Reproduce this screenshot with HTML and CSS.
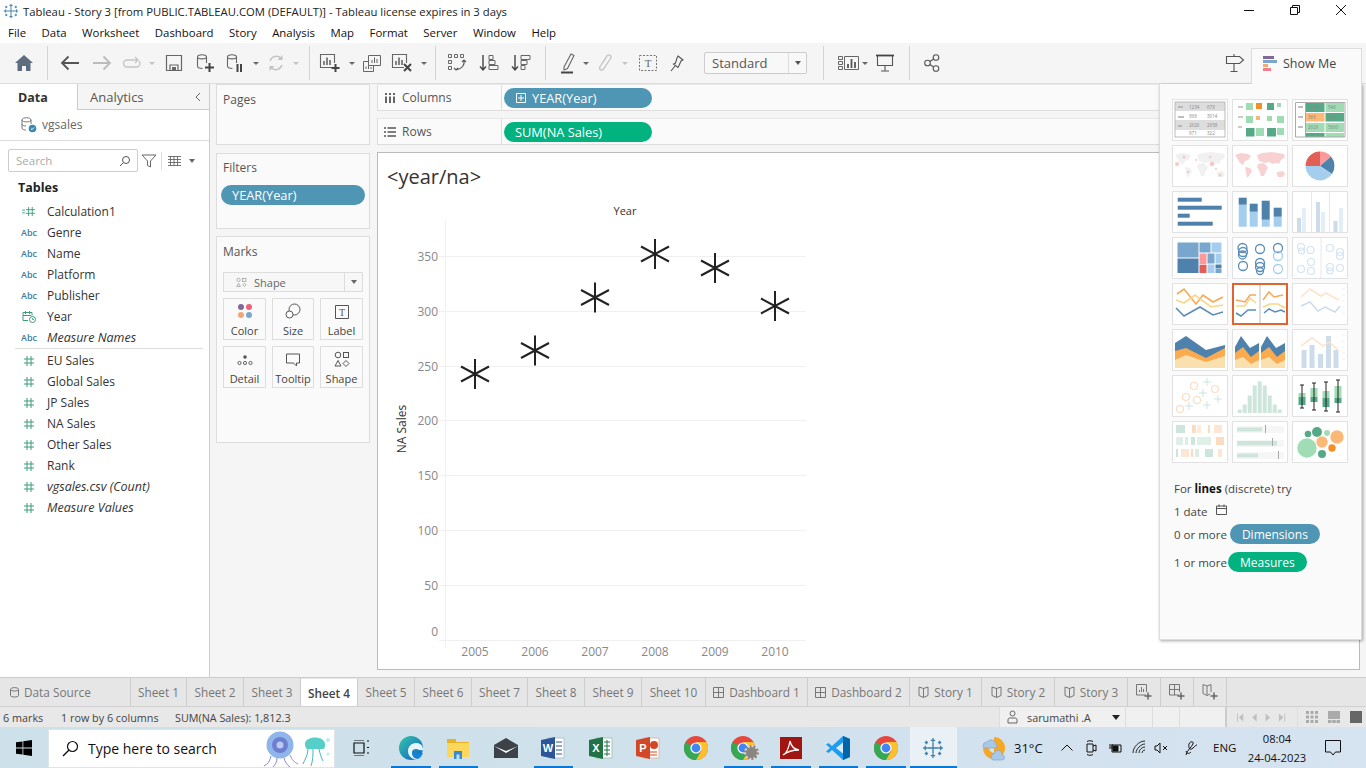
FILE: index.html
```html
<!DOCTYPE html>
<html lang="en">
<head>
<meta charset="utf-8">
<title>Tableau - Story 3</title>
<link rel="stylesheet" href="styles.css">
</head>
<body>
<svg class="defs" width="0" height="0" aria-hidden="true">
  <defs>
    <symbol id="hash" viewBox="0 0 12 12"><path d="M4 1v10M8 1v10M1 4h10M1 8h10" fill="none" stroke="#3f9a7c" stroke-width="1"/></symbol>
    <symbol id="tlogo" viewBox="0 0 20 20"><g fill="none" stroke="#3f7fa8" stroke-width="1.2"><path d="M10 5v10M5 10h10"/><path d="M10 1v4M8 3h4M10 15v4M8 17h4M1 10h4M3 8v4M15 10h4M17 8v4"/><path d="M4 3.500v3M2.500 5h3M16 3.500v3M14.500 5h3M4 13.500v3M2.500 15h3M16 13.500v3M14.500 15h3"/></g></symbol>
    <symbol id="chrome" viewBox="0 0 24 24"><circle cx="12" cy="12" r="12" fill="#e8473b"/><path d="M12 12 1.600 6A12 12 0 0 0 12 24l5-6z" fill="#34a853"/><path d="M12 6h10.400A12 12 0 0 1 12 24l5.200-9z" fill="#fbc02d"/><circle cx="12" cy="12" r="5.600" fill="#fff"/><circle cx="12" cy="12" r="4.400" fill="#4285f4"/></symbol>
    <symbol id="world" viewBox="0 0 54 40"><path d="M2 9l6-2 7 1 3 2-3 4-3 1-2 4-3-2-3-5zM12 21l5 1 2 3-3 5-2 2-1-6zM24 9l5-2 10-1 12 2 1 3-4 3-2 4-3-1-3 1-4-2-4 1-3-1-3-1-1-3zM25 18l5-1 3 2 2 3-2 3-2 5-3 0-2-6-2-3zM44 26l6-1 2 3-2 3-5 0-1-3z"/></symbol>
  </defs>
</svg>
<div class="app">
  <header class="titlebar">
    <svg class="tb-logo"><use href="#tlogo"/></svg>
    <span class="title-text">Tableau - Story 3 [from PUBLIC.TABLEAU.COM (DEFAULT)] - Tableau license expires in 3 days</span>
    <div class="winctl">
      <svg width="12" height="12" viewBox="0 0 12 12"><path d="M1 6.500h10" stroke="#111" fill="none"/></svg>
      <svg width="12" height="12" viewBox="0 0 12 12"><path d="M1.500 3.500h7v7h-7zM3.500 3.500v-2h7v7h-2" stroke="#111" fill="none"/></svg>
      <svg width="12" height="12" viewBox="0 0 12 12"><path d="M1 1l10 10M11 1L1 11" stroke="#111" fill="none"/></svg>
    </div>
  </header>
  <nav class="menubar">
    <span class="m">File</span><span class="m">Data</span><span class="m">Worksheet</span><span class="m">Dashboard</span><span class="m">Story</span><span class="m">Analysis</span><span class="m">Map</span><span class="m">Format</span><span class="m">Server</span><span class="m">Window</span><span class="m">Help</span>
  </nav>
  <div class="toolbar">
    <span class="ti w24"><svg width="20" height="18" viewBox="0 0 20 18"><path d="M10 1 1 9h2.500v8h4.500v-5h4v5h4.500V9H19z" fill="#5d6d7e"/></svg></span>
    <i class="w11"></i><i class="sep"></i><i class="w6"></i>
    <span class="ti w32"><svg width="20" height="16" viewBox="0 0 20 16"><path d="M19 8H2M8.500 1.500 2 8l6.500 6.500" fill="none" stroke="#555" stroke-width="1.800"/></svg></span>
    <span class="ti w32"><svg width="20" height="16" viewBox="0 0 20 16"><path d="M1 8h17M11.500 1.500 18 8l-6.500 6.500" fill="none" stroke="#bbb" stroke-width="1.800"/></svg></span>
    <span class="ti w28"><svg width="20" height="14" viewBox="0 0 20 14"><path d="M15 4H5a3.500 3.500 0 0 0 0 7h10a3.500 3.500 0 0 0 2-6M13 1l3 3-3 3" fill="none" stroke="#c4c4c4" stroke-width="1.300"/></svg></span>
    <i class="w12 caret off"></i>
    <span class="ti w32"><svg width="18" height="18" viewBox="0 0 18 18"><path d="M1.500 1.500h15v15h-15zM5 16.500V11h8v5.500" fill="none" stroke="#666" stroke-width="1.200"/><path d="M7 13h4v3H7z" fill="#666"/></svg></span>
    <span class="ti w30"><svg width="20" height="20" viewBox="0 0 20 20"><path d="M2.500 4c0-3 9-3 9 0v6M2.500 4v9c0 2 2 2.500 5 2.500M2.500 4c0 2.500 9 2.500 9 0" fill="none" stroke="#666" stroke-width="1.100"/><path d="M14.500 10v9M10 14.500h9" stroke="#444" stroke-width="2"/></svg></span>
    <span class="ti w30"><svg width="20" height="20" viewBox="0 0 20 20"><path d="M2.500 4c0-3 9-3 9 0v6M2.500 4v9c0 2 2 2.500 5 2.500M2.500 4c0 2.500 9 2.500 9 0" fill="none" stroke="#666" stroke-width="1.100"/><path d="M12.500 11v8M16 11v8" stroke="#444" stroke-width="2"/></svg></span>
    <i class="w12 caret"></i>
    <span class="ti w28"><svg width="18" height="18" viewBox="0 0 18 18"><path d="M3 7a6.500 6.500 0 0 1 11-2.500M15 11a6.500 6.500 0 0 1-11 2.500" fill="none" stroke="#c4c4c4" stroke-width="1.500"/><path d="M15.500 1v5h-5zM2.500 17v-5h5z" fill="#c4c4c4"/></svg></span>
    <i class="w12 caret off"></i>
    <i class="w7"></i><i class="sep"></i><i class="w4"></i>
    <span class="ti w32"><svg width="22" height="20" viewBox="0 0 22 20"><path d="M14 14.500H1.500v-13h14V10" fill="none" stroke="#666" stroke-width="1.100"/><path d="M5 12V8M8 12V4.500M11 12V7" stroke="#666" stroke-width="1.600"/><path d="M16.500 11v8M12.500 15h8" stroke="#444" stroke-width="2"/></svg></span>
    <i class="w12 caret"></i>
    <span class="ti w28"><svg width="20" height="19" viewBox="0 0 20 19"><path d="M6.500 1.500h12v10h-12zM1.500 7.500h5M1.500 7.500v10h10v-6" fill="none" stroke="#666"/><path d="M10 9V6M12.500 9V3.500M15 9V5M4 15v-2.500M6.500 15v-3.500M9 15v-2" stroke="#666"/></svg></span>
    <span class="ti w32"><svg width="22" height="20" viewBox="0 0 22 20"><path d="M13 14.500H1.500v-13h14V10" fill="none" stroke="#666" stroke-width="1.100"/><path d="M5 12V8M8 12V4.500M11 12V7" stroke="#666" stroke-width="1.600"/><path d="M13 11l7 7M20 11l-7 7" stroke="#444" stroke-width="2"/></svg></span>
    <i class="w12 caret"></i>
    <i class="w5"></i><i class="sep"></i><i class="w5"></i>
    <span class="ti w32"><svg width="20" height="20" viewBox="0 0 20 20"><path d="M1.500 1.500h3v3h-3zM7.500 1.500h3v3h-3zM13.500 1.500h3v3h-3zM1.500 7.500h3v3h-3zM1.500 13.500h3v3h-3z" fill="none" stroke="#666"/><path d="M17 7c1 5-2 9-8 10M7 15l2 2 2-2M15 9l2-2 2 2" fill="none" stroke="#555" stroke-width="1.100"/></svg></span>
    <span class="ti w32"><svg width="20" height="18" viewBox="0 0 20 18"><path d="M4 1v15M1 12.500 4 16l3-3.500" fill="none" stroke="#444" stroke-width="1.400"/><path d="M10 1.500h4v4h-4zM10 6.500h6v4h-6zM10 11.500h9v4h-9z" fill="none" stroke="#666"/></svg></span>
    <span class="ti w32"><svg width="20" height="18" viewBox="0 0 20 18"><path d="M4 1v15M1 12.500 4 16l3-3.500" fill="none" stroke="#444" stroke-width="1.400"/><path d="M10 1.500h9v4h-9zM10 6.500h6v4h-6zM10 11.500h4v4h-4z" fill="none" stroke="#666"/></svg></span>
    <i class="w8"></i><i class="sep"></i><i class="w8"></i>
    <span class="ti w28"><svg width="16" height="22" viewBox="0 0 16 22"><path d="M4 15 11 2l3 1.600-6.500 12.900L4 18z" fill="none" stroke="#666" stroke-width="1.100"/><path d="M1 20.500h12" stroke="#444" stroke-width="2"/></svg></span>
    <i class="w8 caret"></i>
    <span class="ti w30"><svg width="16" height="20" viewBox="0 0 16 20"><path d="M4 12l6-9c2-2.500 5 0 3.500 2.500L6.500 16C5 18 1.500 17 3 13.500L9 5" fill="none" stroke="#c4c4c4" stroke-width="1.300"/></svg></span>
    <i class="w10 caret off"></i>
    <span class="ti w36"><svg width="18" height="16" viewBox="0 0 18 16"><path d="M.5.500h17v15H.500z" fill="none" stroke="#777" stroke-dasharray="2 1.500"/><text x="9" y="12" class="svgt t-t">T</text></svg></span>
    <span class="ti w22"><svg width="14" height="17" viewBox="0 0 14 17"><path d="M8 1l5 4-2 1-2 4.500-1 2L3.500 9 5.500 8 7 3zM5 11l-4 5" fill="none" stroke="#555" stroke-width="1.100"/></svg></span>
    <i class="w16"></i>
    <div class="fit"><span class="fit-l">Standard</span><span class="fit-c"></span></div>
    <i class="w16"></i><i class="sep"></i><i class="w10"></i>
    <span class="ti w28"><svg width="21" height="16" viewBox="0 0 21 16"><path d="M.5 1.500h4v3h-4zM.5 6.500h4v3h-4zM.5 11.500h4v3h-4zM6.500 1.500h14v13h-14z" fill="none" stroke="#666"/><path d="M10 13V9M13.500 13V4M17 13V7" stroke="#555" stroke-width="1.800"/></svg></span>
    <i class="w6 caret"></i>
    <span class="ti w34"><svg width="20" height="18" viewBox="0 0 20 18"><path d="M1 1.500h18" stroke="#444" stroke-width="1.800"/><path d="M2.500 2v9.500h15V2M10 11.500V17M6 17h8" fill="none" stroke="#555" stroke-width="1.100"/></svg></span>
    <i class="w7"></i><i class="sep"></i><i class="w6"></i>
    <span class="ti w32"><svg width="16" height="18" viewBox="0 0 16 18"><circle cx="3.500" cy="9" r="2.800" fill="none" stroke="#555" stroke-width="1.100"/><circle cx="12" cy="3.500" r="2.800" fill="none" stroke="#555" stroke-width="1.100"/><circle cx="12" cy="14.500" r="2.800" fill="none" stroke="#555" stroke-width="1.100"/><path d="M6 7.500l3.500-2.500M6 10.500l3.500 2.500" stroke="#555" fill="none" stroke-width="1.100"/></svg></span>
    <span class="ti sign"><svg width="20" height="20" viewBox="0 0 20 20"><path d="M1.500 3.500h13l4 3.500-4 3.500h-13zM9 1v2.500M9 10.500V18.500M5.500 18.500h7" fill="none" stroke="#555" stroke-width="1.100"/></svg></span>
    <div class="showme-tab">
      <svg width="16" height="15" viewBox="0 0 16 15"><path d="M0 0h11v3H0z" fill="#7f6a9a"/><path d="M0 4h14v3H0z" fill="#7aa7cc"/><path d="M0 8h5v3H0z" fill="#f8a868"/><path d="M0 12h8v3H0z" fill="#f47f8a"/></svg>
      <span>Show Me</span>
    </div>
  </div>

  <main class="main">
    <aside class="datapane">
      <div class="dp-tabs">
        <span class="dp-tab active">Data</span>
        <span class="dp-tab other">Analytics<svg class="collapse" width="8" height="10" viewBox="0 0 8 10"><path d="M6 1 2 5l4 4" fill="none" stroke="#666"/></svg></span>
      </div>
      <div class="ds-row">
        <svg width="17" height="17" viewBox="0 0 17 17"><path d="M2 4c0-3 9-3 9 0M2 4c0 2.500 9 2.500 9 0v4M2 4v8c0 1.500 2 2 4 2M2 8c0 1.500 2 2 4 2" fill="none" stroke="#777"/><circle cx="12.500" cy="12.500" r="3.800" fill="#3a87ad"/><path d="M10.800 12.500l1.200 1.200 2-2.200" fill="none" stroke="#fff"/></svg>
        <span>vgsales</span>
      </div>
      <div class="search-row">
        <div class="searchbox"><span>Search</span><svg width="12" height="12" viewBox="0 0 12 12"><circle cx="7" cy="5" r="3.500" fill="none" stroke="#555"/><path d="M4.500 7.500 1 11" stroke="#555"/></svg></div>
        <svg class="f-ic" width="16" height="14" viewBox="0 0 16 14"><path d="M1 1h14L9.500 7v6l-3-1.500V7z" fill="none" stroke="#666"/></svg>
        <i class="vr"></i>
        <svg class="f-ic2" width="13" height="10" viewBox="0 0 13 10"><path d="M0 .5h13M0 3.500h13M0 6.500h13M0 9.500h13M2.500 0v10M6 0v10M9.500 0v10" stroke="#666" fill="none" stroke-width=".9"/></svg>
        <i class="caret-s"></i>
      </div>
      <div class="tables-h">Tables</div>
      <ul class="fields">
        <li><span class="fi"><svg class="calc" viewBox="0 0 16 12"><path d="M0 4.500h3M0 7.500h3M7 1v10M11 1v10M4 4h10M4 8h10" stroke="#3f9a7c" fill="none"/></svg></span>Calculation1</li>
        <li><span class="fi abc">Abc</span>Genre</li>
        <li><span class="fi abc">Abc</span>Name</li>
        <li><span class="fi abc">Abc</span>Platform</li>
        <li><span class="fi abc">Abc</span>Publisher</li>
        <li><span class="fi"><svg class="yr" viewBox="0 0 14 13"><path d="M1 2.500h9v3M1 2.500v8h5M1 5.500h8M3.500 1v3M7.500 1v3" fill="none" stroke="#3f9a7c"/><circle cx="10.500" cy="9.500" r="3" fill="none" stroke="#3f9a7c"/><path d="M10.500 8v1.500H12" fill="none" stroke="#3f9a7c" stroke-width=".8"/></svg></span>Year</li>
        <li class="ital last-d"><span class="fi abc">Abc</span><span>Measure Names</span></li>
        <li class="first-m"><span class="fi"><svg class="hs"><use href="#hash"/></svg></span>EU Sales</li>
        <li><span class="fi"><svg class="hs"><use href="#hash"/></svg></span>Global Sales</li>
        <li><span class="fi"><svg class="hs"><use href="#hash"/></svg></span>JP Sales</li>
        <li><span class="fi"><svg class="hs"><use href="#hash"/></svg></span>NA Sales</li>
        <li><span class="fi"><svg class="hs"><use href="#hash"/></svg></span>Other Sales</li>
        <li><span class="fi"><svg class="hs"><use href="#hash"/></svg></span>Rank</li>
        <li class="ital"><span class="fi"><svg class="hs"><use href="#hash"/></svg></span>vgsales.csv (Count)</li>
        <li class="ital"><span class="fi"><svg class="hs"><use href="#hash"/></svg></span>Measure Values</li>
      </ul>
    </aside>

    <section class="cards">
      <div class="card pages"><h3>Pages</h3></div>
      <div class="card filters"><h3>Filters</h3><div class="pill blue filter-pill">YEAR(Year)</div></div>
      <div class="card marks">
        <h3>Marks</h3>
        <div class="markdrop">
          <svg width="11" height="11" viewBox="0 0 15 13"><g fill="none" stroke="#999"><circle cx="3.500" cy="3" r="2.300"/><rect x="9" y=".8" width="4.500" height="4.500"/><path d="M3.500 7.500 6 12H1zM11.500 7.500l2.300 2.300-2.300 2.300-2.300-2.300z"/></g></svg>
          <span>Shape</span><b></b>
        </div>
        <div class="markgrid">
          <div class="mb"><svg width="16" height="16" viewBox="0 0 16 16"><circle cx="4" cy="4" r="3" fill="#7f6a9a"/><circle cx="12" cy="4" r="3" fill="#f0607a"/><circle cx="4" cy="12" r="3" fill="#f0a878"/><circle cx="12" cy="12" r="3" fill="#7aa7cc"/></svg><span>Color</span></div>
          <div class="mb"><svg width="16" height="16" viewBox="0 0 16 16"><circle cx="9.500" cy="6.500" r="5.500" fill="none" stroke="#555"/><circle cx="4.500" cy="11.500" r="3.500" fill="#fff" stroke="#555"/></svg><span>Size</span></div>
          <div class="mb"><svg width="14" height="14" viewBox="0 0 14 14"><path d="M.5.500h13v13H.500z" fill="none" stroke="#555"/><text x="7" y="10.500" class="svgt t-l">T</text></svg><span>Label</span></div>
          <div class="mb"><svg width="16" height="14" viewBox="0 0 16 14"><circle cx="8" cy="4" r="1.800" fill="#555"/><g fill="none" stroke="#555" stroke-width=".9"><circle cx="2.500" cy="10" r="1.600"/><circle cx="8" cy="10" r="1.600"/><circle cx="13.500" cy="10" r="1.600"/></g></svg><span>Detail</span></div>
          <div class="mb"><svg width="16" height="14" viewBox="0 0 16 14"><path d="M1.500 1h13v9h-3v3l-3-3h-7z" fill="none" stroke="#555"/></svg><span>Tooltip</span></div>
          <div class="mb"><svg width="16" height="16" viewBox="0 0 16 16"><g fill="none" stroke="#555"><circle cx="4" cy="4" r="2.800"/><rect x="9.500" y="1.500" width="5" height="5"/><path d="M4 9.500 7 15H1zM12 9.500l3 3-3 3-3-3z"/></g></svg><span>Shape</span></div>
        </div>
      </div>
    </section>

    <section class="workspace">
      <div class="shelf"><div class="shelf-l"><svg width="12" height="10" viewBox="0 0 12 10"><path d="M2 0v2M6 0v2M10 0v2M2 3.500V10M6 3.500V10M10 3.500V10" stroke="#555" stroke-width="1.800"/></svg><span>Columns</span></div><div class="pill blue shelf-pill"><svg width="10" height="10" viewBox="0 0 10 10"><path d="M.5.500h9v9h-9zM5 2v6M2 5h6" fill="none" stroke="#fff"/></svg>YEAR(Year)</div></div>
      <div class="shelf"><div class="shelf-l"><svg width="12" height="10" viewBox="0 0 12 10"><path d="M0 1h2M3.500 1H12M0 5h2M3.500 5H12M0 9h2M3.500 9H12" stroke="#555" stroke-width="1.600"/></svg><span>Rows</span></div><div class="pill green shelf-pill sum">SUM(NA Sales)</div></div>
      <div class="view">
        <div class="v-title">&lt;year/na&gt;</div>
        <svg class="chart" width="460" height="460" viewBox="378 200 460 460">
          <g stroke="#f0f0f0" fill="none">
            <path d="M445.500 220v428M439 256.500h367M439 311.500h367M439 366.500h367M439 420.500h367M439 475.500h367M439 530.500h367M439 585.500h367M439 640.500h367"/>
          </g>
          <text x="625" y="215" class="ax-t">Year</text>
          <text transform="translate(406 429) rotate(-90)" class="ax-t na">NA Sales</text>
          <g class="ax-l">
            <text x="438" y="261">350</text><text x="438" y="316">300</text><text x="438" y="371">250</text><text x="438" y="425">200</text><text x="438" y="480">150</text><text x="438" y="535">100</text><text x="438" y="590">50</text><text x="438" y="636">0</text>
          </g>
          <g class="ax-b">
            <text x="475" y="656">2005</text><text x="535" y="656">2006</text><text x="595" y="656">2007</text><text x="655" y="656">2008</text><text x="715" y="656">2009</text><text x="775" y="656">2010</text>
          </g>
          <g class="stars">
            <path d="M475 359v30M461 366.500l28 15M461 381.500l28-15"/>
            <path d="M535 335.500v30M521 343l28 15M521 358l28-15"/>
            <path d="M595 282.500v30M581 290l28 15M581 305l28-15"/>
            <path d="M655 239v30M641 246.500l28 15M641 261.500l28-15"/>
            <path d="M715 253v30M701 260.500l28 15M701 275.500l28-15"/>
            <path d="M775 291v30M761 298.500l28 15M761 313.500l28-15"/>
          </g>
        </svg>
      </div>
    </section>

    <aside class="showme">
      <div class="thumbs">
        <div class="thumb"><svg viewBox="1 1 54 40"><rect x="3" y="3" width="50" height="9" fill="#ddd"/><rect x="3" y="21" width="50" height="10" fill="#ddd"/><rect x="3" y="3" width="50" height="35" fill="none" stroke="#bbb"/><path d="M6 8h5M6 18h6M6 27h4" stroke="#aaa" stroke-width="1.500"/><g class="mini"><text x="17" y="10">1234</text><text x="35" y="10">678</text><text x="17" y="19">368</text><text x="35" y="19">3014</text><text x="17" y="28">2626</text><text x="35" y="28">2938</text><text x="17" y="36">971</text><text x="35" y="36">322</text></g></svg></div>
        <div class="thumb"><svg viewBox="1 1 54 40"><path d="M6 8h5M6 18h5M6 28h4" stroke="#bbb" stroke-width="1.500"/><g fill="#9fdcb3"><rect x="14" y="4" width="7" height="7"/><rect x="45" y="4" width="4" height="4"/><rect x="14" y="17" width="7" height="7"/><rect x="35" y="17" width="5" height="5"/><rect x="45" y="17" width="7" height="7"/><rect x="24" y="29" width="8" height="8"/><rect x="45" y="29" width="7" height="7"/></g><g fill="#55a986"><rect x="35" y="4" width="7" height="7"/><rect x="14" y="29" width="8.500" height="8.500"/><rect x="35" y="29" width="9" height="8.500"/></g><rect x="24" y="4" width="6" height="6" fill="#f68e28"/><rect x="24" y="17" width="4" height="4" fill="#fbb77a"/></svg></div>
        <div class="thumb"><svg viewBox="1 1 54 40"><rect x="14" y="4" width="18.500" height="9" fill="#55a986"/><rect x="33.500" y="4" width="18.500" height="9" fill="#9fdcb3"/><rect x="14" y="14" width="18.500" height="8.500" fill="#fdb876"/><rect x="33.500" y="14" width="18.500" height="8.500" fill="#55a986"/><rect x="14" y="24" width="18.500" height="9" fill="#9fdcb3"/><rect x="33.500" y="24" width="18.500" height="9" fill="#9fdcb3"/><rect x="14" y="34" width="18.500" height="4" fill="#55a986"/><rect x="33.500" y="34" width="18.500" height="4" fill="#9fdcb3"/><path d="M3.500 3.500V38M3.500 3.500H53V38M3.500 38H53M13.500 3.500V38" fill="none" stroke="#aaa"/><path d="M6 8h5M6 18h5M6 28h5" stroke="#aaa" stroke-width="1.500"/><g class="mini"><text x="16" y="10">1234</text><text x="36" y="10">546</text><text x="16" y="20">368</text><text x="36" y="20">380</text><text x="16" y="30">2626</text><text x="36" y="30">5860</text></g></svg></div>
        <div class="thumb"><svg viewBox="1 1 54 40"><use href="#world" x="1" y="1" width="54" height="40" fill="#f1f1f1"/><g fill="#f6c9c9"><circle cx="5" cy="19" r="2"/><circle cx="12" cy="12" r="1.500"/><circle cx="24" cy="15" r="1"/><circle cx="40" cy="19" r="2.300"/><circle cx="38" cy="12" r="1.200"/><circle cx="16" cy="27" r="1.200"/><circle cx="48" cy="30" r="1.500"/><circle cx="44" cy="24" r="1"/></g></svg></div>
        <div class="thumb"><svg viewBox="1 1 54 40"><use href="#world" x="1" y="1" width="54" height="40" fill="#f8d2d2"/></svg></div>
        <div class="thumb"><svg viewBox="1 1 54 40"><path d="M28 21V6.500A14.500 14.500 0 0 1 39 11.500z" fill="#fc9a9b"/><path d="M28 21 39 11.500A14.500 14.500 0 0 1 40 29z" fill="#4e82ad"/><path d="M28 21 40 29A14.500 14.500 0 0 1 13.500 21z" fill="#a5cdee"/><path d="M28 21H13.500A14.500 14.500 0 0 1 28 6.500z" fill="#e15f57"/></svg></div>
        <div class="thumb"><svg viewBox="1 1 54 40"><g fill="#4e82ad"><rect x="5.700" y="6.700" width="24" height="4"/><rect x="5.700" y="14.700" width="44" height="4"/><rect x="5.700" y="22.700" width="12" height="4"/><rect x="5.700" y="30.700" width="35" height="4"/></g></svg></div>
        <div class="thumb"><svg viewBox="1 1 54 40"><g fill="#a5cdee"><rect x="6.700" y="13.700" width="8" height="22"/><rect x="17.700" y="20.700" width="8" height="15"/><rect x="29.700" y="28.700" width="8" height="7"/><rect x="41.700" y="25.700" width="8" height="10"/></g><g fill="#4e82ad"><rect x="6.700" y="6.700" width="8" height="7"/><rect x="17.700" y="12.700" width="8" height="8"/><rect x="29.700" y="9.700" width="8" height="19"/><rect x="41.700" y="16.700" width="8" height="9"/></g></svg></div>
        <div class="thumb"><svg viewBox="1 1 54 40"><path d="M19.500 1v40M37.500 1v40" stroke="#e8e8e8"/><g fill="#cddcea"><rect x="5" y="27" width="4" height="15"/><rect x="24" y="11" width="4" height="31"/><rect x="41.500" y="30" width="4" height="12"/></g><g fill="#e2eef8"><rect x="10" y="17" width="4" height="25"/><rect x="29" y="21" width="4" height="21"/><rect x="47" y="17" width="4" height="25"/></g></svg></div>
        <div class="thumb"><svg viewBox="1 1 54 40"><rect x="5.500" y="5.500" width="21" height="15" fill="#78a6cc"/><rect x="5.500" y="21.500" width="21" height="14.500" fill="#4e82ad"/><rect x="27.500" y="5.500" width="11" height="10" fill="#78a6cc"/><rect x="39.500" y="5.500" width="10" height="10" fill="#a5cdee"/><rect x="27.500" y="16.500" width="7" height="11" fill="#fc9a9b"/><rect x="35.500" y="16.500" width="7" height="10" fill="#78a6cc"/><rect x="43.500" y="16.500" width="6" height="10" fill="#a5cdee"/><rect x="27.500" y="28" width="7" height="8" fill="#e15f57"/><rect x="35.500" y="27.500" width="7" height="8.500" fill="#a5cdee"/><rect x="43.500" y="27.500" width="6" height="4" fill="#4e82ad"/><rect x="43.500" y="32" width="6" height="4" fill="#78a6cc"/></svg></div>
        <div class="thumb"><svg viewBox="1 1 54 40"><g fill="none" stroke="#5a8db8" stroke-width="1.300"><circle cx="10.500" cy="11" r="4.500"/><circle cx="11" cy="15" r="4.500"/><circle cx="10.500" cy="18" r="4"/><circle cx="28" cy="12" r="4.500"/><circle cx="46" cy="11" r="4.500"/><circle cx="11" cy="29" r="4.500"/><circle cx="28" cy="26" r="4.500"/><circle cx="28" cy="30" r="4.500"/><circle cx="28" cy="34" r="3.500"/><circle cx="46" cy="32" r="4.500" stroke="#a5cdee"/><circle cx="46" cy="19" r="4.500" stroke="#a5cdee"/></g></svg></div>
        <div class="thumb"><svg viewBox="1 1 54 40"><path d="M29 1v40" stroke="#e8e8e8"/><g fill="none" stroke="#d4e4f2" stroke-width="1.200"><circle cx="9" cy="10" r="3.500"/><circle cx="9.500" cy="14" r="3"/><circle cx="18.500" cy="13" r="3.500"/><circle cx="9" cy="32" r="3.500"/><circle cx="19" cy="25" r="3.500"/><circle cx="19" cy="34" r="3.500"/><circle cx="38" cy="11" r="3.500"/><circle cx="48" cy="15" r="3.500"/><circle cx="48" cy="19" r="3.500"/><circle cx="38" cy="30" r="3.500"/><circle cx="38" cy="34" r="3"/><circle cx="48" cy="31" r="3.500"/></g></svg></div>
        <div class="thumb"><svg viewBox="1 1 54 40"><g fill="none" stroke-width="1.600"><polyline points="5,11 12,6 24,21 31,12 41,19 51,14" stroke="#f9a857"/><polyline points="4,17 12,20 23,12 39,24 51,22" stroke="#f8d68a"/><polyline points="4,25 12,33 28,24 41,32 51,29" stroke="#5a8db8"/></g></svg></div>
        <div class="thumb sel"><svg viewBox="1 1 54 40"><path d="M28 1v40" stroke="#bbb"/><g fill="none" stroke-width="1.500"><polyline points="4,17 13,19 18,12 24,12" stroke="#f9a857"/><polyline points="4,23 13,23 18,15 24,20" stroke="#f8d68a"/><polyline points="4,30 9,33 16,27 24,27" stroke="#5a8db8"/><polyline points="31,17 37,9 42,14 51,12" stroke="#f9a857"/><polyline points="31,24 38,21 46,21 53,25" stroke="#f8d68a"/><polyline points="32,30 37,26 43,29 49,27 53,29" stroke="#5a8db8"/></g></svg></div>
        <div class="thumb"><svg viewBox="1 1 54 40"><g fill="none" stroke-width="1.500"><polyline points="9,14 18,6 29,13 34,10 47,17" stroke="#fde2c8"/><polyline points="9,23 18,19 26,28 33,24 43,29 48,23" stroke="#cddcea"/></g><path d="M50 6h3M50 12h3M50 18h3M50 24h3M50 30h3" stroke="#eee"/></svg></div>
        <div class="thumb"><svg viewBox="1 1 54 40"><path d="M3 14 14 7l20 14 19-5v23H3z" fill="#4e82ad"/><path d="M3 22l11-3 20 10 19-10v20H3z" fill="#fbab4f"/><path d="M3 31l11-5 20 7 19-6v12H3z" fill="#f9e0ae"/></svg></div>
        <div class="thumb"><svg viewBox="1 1 54 40"><path d="M3 18l6-11 9 12 9-5v25H3z" fill="#4e82ad"/><path d="M3 24l8-6 8 10 8-6v17H3z" fill="#fbab4f"/><path d="M3 31l8-3 8 7 8-4v8H3z" fill="#f9e0ae"/><path d="M29 18l6-11 9 12 9-5v25H29z" fill="#4e82ad"/><path d="M29 24l8-6 8 10 8-6v17H29z" fill="#fbab4f"/><path d="M29 31l8-3 8 7 8-4v8H29z" fill="#f9e0ae"/></svg></div>
        <div class="thumb"><svg viewBox="1 1 54 40"><g fill="#cddcea"><rect x="9.500" y="21" width="5" height="18"/><rect x="17.500" y="16" width="5" height="23"/><rect x="26" y="25" width="5" height="14"/><rect x="34" y="7" width="5" height="32"/><rect x="41.500" y="21" width="5" height="18"/></g><polyline points="9,17 20,9 31,17 37,13 47,22" fill="none" stroke="#fde2c8" stroke-width="1.500"/><path d="M50 6h3M50 12h3M50 18h3M50 24h3M50 30h3" stroke="#eee"/></svg></div>
        <div class="thumb"><svg viewBox="1 1 54 40"><g fill="none" stroke="#fddcc0" stroke-width="1.200"><circle cx="22" cy="11" r="3.500"/><circle cx="43" cy="14" r="3.500"/><circle cx="14" cy="22" r="3.500"/><circle cx="25" cy="25" r="3.500"/><circle cx="8" cy="34" r="3.500"/></g><path d="M35 3v8M31 7h8M31 14v8M27 18h8M46 20v8M42 24h8M17 27v8M13 31h8M35 26v8M31 30h8" stroke="#cde5db" fill="none"/></svg></div>
        <div class="thumb"><svg viewBox="1 1 54 40"><g fill="#cde5db"><rect x="5.700" y="34.500" width="4" height="3.500"/><rect x="10.700" y="29.500" width="4" height="8.500"/><rect x="15.700" y="20.500" width="4" height="17.500"/><rect x="20.700" y="10.500" width="4" height="27.500"/><rect x="25.700" y="6.500" width="4" height="31.500"/><rect x="30.700" y="10.500" width="4" height="27.500"/><rect x="35.700" y="20.500" width="4" height="17.500"/><rect x="40.700" y="29.500" width="4" height="8.500"/><rect x="45.700" y="34.500" width="4" height="3.500"/></g></svg></div>
        <div class="thumb"><svg viewBox="1 1 54 40"><rect x="6.500" y="18" width="7" height="4" fill="#9fdcb3"/><rect x="6.500" y="22" width="7" height="8" fill="#55a986"/><rect x="18.500" y="13" width="7" height="9" fill="#9fdcb3"/><rect x="18.500" y="22" width="7" height="5" fill="#55a986"/><rect x="30.500" y="16" width="7" height="7" fill="#9fdcb3"/><rect x="30.500" y="23" width="7" height="9" fill="#55a986"/><rect x="42.500" y="11" width="7" height="12" fill="#9fdcb3"/><rect x="42.500" y="23" width="7" height="5" fill="#55a986"/><path d="M10 10v23M8 10h4M8 33h4M22 8v27M20 8h4M20 35h4M34 7v29M32 7h4M32 36h4M46 5v32M44 5h4M44 37h4" stroke="#222" fill="none"/></svg></div>
        <div class="thumb"><svg viewBox="1 1 54 40"><g fill="#cde5db"><rect x="4" y="4" width="9" height="8"/><rect x="25" y="16" width="14" height="8" opacity=".6"/><rect x="4" y="16" width="7" height="8" opacity=".6"/><rect x="13" y="16" width="3" height="8" opacity=".7"/><rect x="19" y="16" width="4" height="8"/><rect x="33" y="28" width="8" height="8"/><rect x="4" y="28" width="2" height="8"/><rect x="23" y="28" width="4" height="8" opacity=".7"/></g><g fill="#fcdcc0"><rect x="20" y="4" width="4" height="8"/><rect x="42" y="4" width="8" height="8" opacity=".7"/><rect x="44" y="16" width="8" height="8"/><rect x="9" y="28" width="8" height="8" opacity=".7"/><rect x="19" y="28" width="2" height="8"/><rect x="46" y="28" width="4" height="8" opacity=".7"/><rect x="25" y="4" width="4" height="8" opacity=".6"/><rect x="36" y="4" width="2" height="8"/></g></svg></div>
        <div class="thumb"><svg viewBox="1 1 54 40"><g fill="#f6f6f6"><rect x="5" y="5" width="47" height="7"/><rect x="5" y="19" width="47" height="7"/><rect x="5" y="31" width="47" height="7"/></g><g fill="#cde5db"><rect x="5" y="6.500" width="25" height="4"/><rect x="5" y="20" width="40" height="4.500"/><rect x="5" y="32.500" width="21" height="4"/></g><path d="M33.500 4v8M40.500 17v8M46.500 30v8" stroke="#aaa" stroke-width="1"/></svg></div>
        <div class="thumb"><svg viewBox="1 1 54 40"><circle cx="15" cy="27" r="9.700" fill="#a0dcb4"/><circle cx="45" cy="16" r="6.700" fill="#fdb876"/><circle cx="30" cy="21" r="5.700" fill="#fdb876"/><circle cx="25" cy="11" r="5" fill="#55a986"/><circle cx="16" cy="13" r="3.300" fill="#55a986"/><circle cx="35" cy="12" r="3" fill="#a0dcb4"/><circle cx="40" cy="27" r="3.700" fill="#f68e28"/><circle cx="30" cy="33" r="4" fill="#55a986"/></svg></div>
      </div>
      <div class="hint r1">For&nbsp;<b>lines</b>&nbsp;(discrete) try</div>
      <div class="hint r2">1 date<svg class="cal" width="11" height="11" viewBox="0 0 11 11"><path d="M.5 2h10v8.500H.500zM.5 4.500h10M3 .5v2.500M8 .5v2.500" fill="none" stroke="#555"/></svg></div>
      <div class="hint r3">0 or more<span class="pill blue hp dim">Dimensions</span></div>
      <div class="hint r4">1 or more<span class="pill green hp mea">Measures</span></div>
    </aside>
  </main>

  <div class="tabs">
    <span class="tab ds"><svg width="9" height="11" viewBox="0 0 9 11"><path d="M.5 2.500c0-2.500 8-2.500 8 0v6c0 2-8 2-8 0zM.5 2.500c0 2 8 2 8 0" fill="none" stroke="#777"/></svg>Data Source</span>
    <span class="tab w56">Sheet 1</span><span class="tab">Sheet 2</span><span class="tab">Sheet 3</span><span class="tab cur">Sheet 4</span><span class="tab">Sheet 5</span><span class="tab">Sheet 6</span><span class="tab w56">Sheet 7</span><span class="tab">Sheet 8</span><span class="tab">Sheet 9</span><span class="tab w63">Sheet 10</span>
    <span class="tab dash"><svg width="11" height="11" viewBox="0 0 11 11"><path d="M.5.500h10v10H.500zM5.500.5v10M.5 5.500h10" fill="none" stroke="#777"/></svg>Dashboard 1</span>
    <span class="tab dash"><svg width="11" height="11" viewBox="0 0 11 11"><path d="M.5.500h10v10H.500zM5.500.5v10M.5 5.500h10" fill="none" stroke="#777"/></svg>Dashboard 2</span>
    <span class="tab story"><svg width="11" height="12" viewBox="0 0 11 12"><path d="M5.500 2.500 1 1v8.500l4.500 2 4.500-2V1zM5.500 2.500v9" fill="none" stroke="#777"/></svg>Story 1</span>
    <span class="tab story"><svg width="11" height="12" viewBox="0 0 11 12"><path d="M5.500 2.500 1 1v8.500l4.500 2 4.500-2V1zM5.500 2.500v9" fill="none" stroke="#777"/></svg>Story 2</span>
    <span class="tab story"><svg width="11" height="12" viewBox="0 0 11 12"><path d="M5.500 2.500 1 1v8.500l4.500 2 4.500-2V1zM5.500 2.500v9" fill="none" stroke="#777"/></svg>Story 3</span>
    <span class="tab add a1"><svg width="16" height="16" viewBox="0 0 16 16"><path d="M10 11H.5V.5h10V8" fill="none" stroke="#777"/><path d="M3.500 8V6M5.500 8V3M7.500 8V5" stroke="#777"/><path d="M12 8.500v7M8.500 12h7" stroke="#666" stroke-width="1.500"/></svg></span>
    <span class="tab add"><svg width="16" height="16" viewBox="0 0 16 16"><path d="M10 11H.5V.5h10V8M5.500.5V11M.5 5.500h10" fill="none" stroke="#777"/><path d="M12 8.500v7M8.500 12h7" stroke="#666" stroke-width="1.500"/></svg></span>
    <span class="tab add"><svg width="16" height="16" viewBox="0 0 16 16"><path d="M5 2 1 .5v9L5 11.500l3-1.500M5 2l4-1.500V8M5 2v9" fill="none" stroke="#777"/><path d="M12 8.500v7M8.500 12h7" stroke="#666" stroke-width="1.500"/></svg></span>
  </div>

  <div class="status">
    <span class="st a">6 marks</span><span class="st b">1 row by 6 columns</span><span class="st c">SUM(NA Sales): 1,812.3</span>
    <div class="user"><svg width="11" height="14" viewBox="0 0 11 14"><circle cx="5.500" cy="3.500" r="2.500" fill="none" stroke="#666"/><path d="M1 13V10c0-1.500 1-2 2-2h5c1 0 2 .5 2 2v3z" fill="none" stroke="#666"/></svg><span>sarumathi .A</span><b></b></div>
    <i class="cell"></i><i class="cell"></i><i class="cell wide"></i>
    <div class="pager"><svg width="50" height="9" viewBox="0 0 56 9"><g fill="#c0c0c0"><path d="M0 0h1v9H0zM7 0v9L2 4.500zM22 0v9l-5-4.500zM32 0v9l5-4.500zM47 0v9l5-4.500zM53 0h1v9h-1z"/></g></svg></div>
    <div class="views">
      <svg width="12" height="12" viewBox="0 0 12 12"><path d="M0 0h3v3H0zM4.500 0h3v3h-3zM9 0h3v3H9zM0 4.500h3v3H0zM4.500 4.500h3v3h-3zM9 4.500h3v3H9zM0 9h3v3H0zM4.500 9h3v3h-3zM9 9h3v3H9z" fill="#aaa"/></svg>
      <svg width="12" height="12" viewBox="0 0 12 12"><path d="M0 0h12v8H0zM0 9h3.500v3H0zM4.250 9h3.500v3h-3.500zM8.500 9H12v3H8.500z" fill="#aaa"/></svg>
      <svg width="12" height="12" viewBox="0 0 12 12"><path d="M0 0h12v12H0z" fill="#666"/></svg>
    </div>
  </div>

  <footer class="taskbar">
    <div class="start"><svg width="16" height="16" viewBox="0 0 16 16"><path d="M0 2.300 6.500 1.400v6.200H0zM7.300 1.300 16 0v7.600H7.300zM0 8.400h6.500v6.200L0 13.700zM7.300 8.400H16V16l-8.700-1.300z" fill="#000"/></svg></div>
    <div class="tsearch">
      <svg width="17" height="17" viewBox="0 0 17 17"><circle cx="10.500" cy="6.500" r="5" fill="none" stroke="#111" stroke-width="1.200"/><path d="M6.800 10.200 1 16" stroke="#111" stroke-width="1.400"/></svg>
      <span>Type here to search</span>
      <svg class="jelly" width="70" height="38" viewBox="0 0 70 38"><circle cx="19" cy="15" r="13.500" fill="#8fb6ea"/><circle cx="19" cy="15" r="8" fill="#6f7fd0"/><circle cx="19" cy="15" r="3.500" fill="#b9c9f2"/><path d="M10 26c-1 5-3 8-7 10M16 28c0 4-2 7-4 9M23 28c1 4 3 7 6 9M29 25c2 5 4 7 8 9" fill="none" stroke="#8a8ad0" stroke-width="1"/><path d="M44 14c0-8 19-9 20 0 .5 3-1 5-2 5H47c-2 0-3-2-3-5z" fill="#55cfc8"/><path d="M47 19c0 6-3 10-5 15M52 19c0 6 0 11-2 17M58 19c1 5 2 8 4 12" fill="none" stroke="#40b8c0" stroke-width="1"/><circle cx="67" cy="10" r="2" fill="#bfeaf0"/><circle cx="67" cy="24" r="1.500" fill="#bfeaf0"/></svg>
    </div>
    <div class="tview"><svg width="16" height="16" viewBox="0 0 16 16"><path d="M1 0h10M1 16h10M1 3h10v10H1zM14 1h2M14 7.500h2M14 13h2" fill="none" stroke="#111" stroke-width="1.200"/></svg></div>
    <div class="app-i on"><svg width="24" height="24" viewBox="0 0 24 24"><defs><linearGradient id="eg" x1="0" y1="0" x2="1" y2="1"><stop offset="0" stop-color="#36c5a8"/><stop offset="1" stop-color="#0b62c4"/></linearGradient></defs><circle cx="12" cy="12" r="12" fill="url(#eg)"/><path d="M24 14c0-5-3-7-7-7-5 0-8 4-8 8 0 5 4 9 10 8-5-1-6-4-6-7 0-2 2-3 4-3 3 0 3 2 7 1z" fill="#e8f4fb"/><path d="M13 16c0 3 1 6 6 7 2-1 4-3 5-6-3 1-8 1-11-1z" fill="#1583d8"/></svg></div>
    <div class="app-i on"><svg width="22" height="22" viewBox="0 0 22 22"><path d="M0 2h9v3h13v15H0z" fill="#e7b225"/><path d="M0 6h22v14H0z" fill="#fbd75c"/><path d="M7 14h8v8H7z" fill="#3a8ad0"/><path d="M9.500 17.500h3V22h-3z" fill="#bfe0f5"/></svg></div>
    <div class="app-i"><svg width="24" height="20" viewBox="0 0 24 20"><path d="M0 7 12 0l12 7v13H0z" fill="#3c4248"/><path d="M0 8l12 7 12-7-12 5z" fill="#fff"/></svg></div>
    <div class="app-i on"><svg width="24" height="24" viewBox="0 0 24 24"><path d="M7 2h16v20H7z" fill="#fff" stroke="#b8c4d8"/><path d="M15 6h6M15 10h6M15 14h6M15 18h6" stroke="#2b579a"/><path d="M0 4 14 1v22L0 20z" fill="#2b579a"/><text x="7" y="16" class="svgt off-t">W</text></svg></div>
    <div class="app-i"><svg width="24" height="24" viewBox="0 0 24 24"><path d="M7 2h16v20H7z" fill="#fff" stroke="#a8c8b4"/><path d="M15 6h6M15 10h6M15 14h6M15 18h6M18 4v16" stroke="#217346"/><path d="M0 4 14 1v22L0 20z" fill="#217346"/><text x="7" y="16" class="svgt off-t">X</text></svg></div>
    <div class="app-i"><svg width="24" height="24" viewBox="0 0 24 24"><path d="M7 2h16v20H7z" fill="#fff" stroke="#e0b8a8"/><circle cx="18" cy="9" r="4" fill="#d24726"/><path d="M14 16h7M14 19h7" stroke="#d24726"/><path d="M0 4 14 1v22L0 20z" fill="#d24726"/><text x="7" y="16" class="svgt off-t">P</text></svg></div>
    <div class="app-i"><svg class="chr"><use href="#chrome"/></svg></div>
    <div class="app-i on badge"><svg class="chr"><use href="#chrome"/></svg><span class="avatar"></span></div>
    <div class="app-i on"><svg width="22" height="24" viewBox="0 0 22 24"><path d="M0 1h22v22H0z" fill="#a11611"/><path d="M3 19c4-2 6-8 7-14 1 5 3 8 9 9-5 0-11 1-16 5z" fill="none" stroke="#fff" stroke-width="1.300"/></svg></div>
    <div class="app-i on"><svg width="24" height="24" viewBox="0 0 24 24"><path d="M17 0l7 3v18l-7 3L6 14l-3.500 3L0 15.500 4 12 0 8.500 2.500 7 6 10z" fill="#1f9cf0"/><path d="M17 6.500 10 12l7 5.500z" fill="#d7ecfb"/><path d="M17 0l7 3v18l-7 3z" fill="#0065a9"/></svg></div>
    <div class="app-i on"><svg class="chr"><use href="#chrome"/></svg></div>
    <div class="app-i on act"><svg width="22" height="22"><use href="#tlogo"/></svg></div>
    <div class="weather">
      <svg width="28" height="28" viewBox="0 0 28 28"><path d="M14 3a11 11 0 1 1-11 11h6a5 5 0 0 0 5 5z" fill="#f7a823"/><path d="M3 12a4 4 0 0 1 4-4 5 5 0 0 1 9 2 3 3 0 0 1 0 4H4a3 3 0 0 1-1-2z" fill="#a9c8e8" stroke="#7fa6cf" stroke-width=".7"/><path d="M11 23a3 3 0 0 1 3-3 4 4 0 0 1 8 1 2.500 2.500 0 0 1 0 5H13a3 3 0 0 1-2-3z" fill="#a9c8e8" stroke="#7fa6cf" stroke-width=".7"/></svg>
      <span>31°C</span>
    </div>
    <div class="tray">
      <svg class="t1" width="12" height="7" viewBox="0 0 12 7"><path d="M.5 6.500 6 1l5.500 5.500" fill="none" stroke="#111"/></svg>
      <svg class="t2" width="12" height="16" viewBox="0 0 12 16"><path d="M2 4h6v8H2zM8 6l3-1v6l-3-1M2 1.500c2-1 4-1 6 0M2 14.500c2 1 4 1 6 0" fill="none" stroke="#111"/></svg>
      <svg class="t3" width="14" height="12" viewBox="0 0 14 12"><path d="M4 3h9v7H4z" fill="none" stroke="#111"/><path d="M5 4h5v5H5zM1 6h4M2 2v3M4 2v3" fill="#111" stroke="#111"/></svg>
      <svg class="t4" width="14" height="14" viewBox="0 0 14 14"><path d="M1 13C1 7 7 1 13 1M4 13c0-4 5-9 9-9M7 13c0-3 3-6 6-6M10 13c0-1 1-3 3-3" fill="none" stroke="#222"/></svg>
      <svg class="t5" width="14" height="12" viewBox="0 0 14 12"><path d="M1 4h2l3-3v10L3 8H1zM9 4l4 4M13 4 9 8" fill="none" stroke="#111"/></svg>
      <svg class="t6" width="14" height="16" viewBox="0 0 14 16"><path d="M2 15c1-5 5-7 7-11 1-3-3-3-4 0-1 4 1 7 4 4 2-2 3-3 4-3M2 11c1 3 3 3 5 1" fill="none" stroke="#111"/></svg>
      <span class="eng">ENG</span>
    </div>
    <div class="clock"><span>08:04</span><span>24-04-2023</span></div>
    <div class="notif"><svg width="16" height="16" viewBox="0 0 16 16"><path d="M.5.500h15v11.500h-5L8 15l-2.500-3h-5z" fill="none" stroke="#111"/></svg></div>
  </footer>
</div>
</body>
</html>
```

FILE: styles.css
```css
* { box-sizing: border-box; }
html, body { margin: 0; padding: 0; }
body { font-family: "Open Sans", "Liberation Sans", sans-serif; color: #333; background: #fff; overflow: hidden; }
i { display: block; font-style: normal; }
ul { list-style: none; margin: 0; padding: 0; }
h3 { margin: 0; font-weight: 400; font-size: 12px; color: #555; }
.defs { position: absolute; }
.app { width: 1366px; height: 768px; display: flex; flex-direction: column; overflow: hidden; }

.titlebar { height: 22px; display: flex; align-items: center; padding-left: 3px; font-size: 11.300px; color: #222; }
.tb-logo { width: 16px; height: 16px; margin-right: 4px; }
.winctl { margin-left: auto; display: flex; gap: 34px; padding-right: 19px; margin-top: -2px; }
.menubar { height: 21px; display: flex; align-items: center; padding-left: 8px; font-size: 11.400px; color: #111; }
.m { margin-right: 15.500px; }

.toolbar { height: 41px; display: flex; align-items: center; padding-left: 12px; background: #f5f5f5; border-bottom: 1px solid #ddd; position: relative; }
.ti { display: flex; align-items: center; justify-content: center; flex: none; }
.toolbar > i { flex: none; height: 34px; }
.toolbar > i.sep { width: 1px; background: #d4d4d4; height: 34px; }
.w4 { width: 4px; } .w5 { width: 5px; } .w6 { width: 6px; } .w7 { width: 7px; } .w8 { width: 8px; }
.w10 { width: 10px; } .w11 { width: 11px; } .w12 { width: 12px; } .w16 { width: 16px; } .w22 { width: 22px; }
.w24 { width: 24px; } .w28 { width: 28px; } .w30 { width: 30px; } .w32 { width: 32px; } .w34 { width: 34px; } .w36 { width: 36px; }
.caret { display: flex !important; align-items: center; justify-content: center; }
.caret::after { content: ""; border: 3px solid transparent; border-top: 3.500px solid #666; border-bottom: 0; }
.caret.off::after { border-top-color: #c4c4c4; }
.fit { width: 103px; height: 22px; flex: none; background: #f8f8f8; border: 1px solid #ccc; border-radius: 2px; display: flex; align-items: center; font-size: 13px; color: #555; }
.fit-l { flex: 1; padding-left: 7px; }
.fit-c { width: 18px; height: 100%; border-left: 1px solid #ddd; display: flex; align-items: center; justify-content: center; }
.fit-c::after { content: ""; border: 3.500px solid transparent; border-top: 4px solid #555; border-bottom: 0; }
.sign { margin-left: auto; margin-right: 6px; width: 20px; }
.showme-tab { width: 111px; height: 36px; margin-right: 4px; align-self: flex-end; margin-bottom: -1px; background: #fafafa; border: 1px solid #ddd; border-bottom: 0; display: flex; align-items: center; padding: 0 0 6px 11px; gap: 4px; font-size: 12.500px; color: #444; position: relative; z-index: 3; }

.main { flex: 1; min-height: 0; display: flex; position: relative; background: #f5f5f5; }
.datapane { width: 210px; flex: none; background: #fff; border-right: 1px solid #ccc; }
.dp-tabs { display: flex; height: 26px; }
.dp-tab { display: flex; align-items: center; font-size: 12.500px; }
.dp-tab.active { width: 77px; padding-left: 18px; font-weight: 700; color: #333; }
.dp-tab.other { flex: 1; padding: 1px 0 0 12px; font-size: 13px; background: #f5f5f5; border-left: 1px solid #ccc; border-bottom: 1px solid #ccc; color: #555; position: relative; }
.collapse { position: absolute; right: 7px; top: 8px; }
.ds-row { height: 31px; display: flex; align-items: center; padding: 0 0 2px 20px; gap: 5px; font-size: 12px; color: #666; border-bottom: 1px solid #ddd; }
.search-row { display: flex; align-items: center; padding: 8px 0 0 8px; height: 31px; }
.searchbox { width: 130px; height: 23px; border: 1px solid #ccc; border-radius: 2px; display: flex; align-items: center; justify-content: space-between; padding: 0 6px 0 7px; font-size: 11.500px; color: #aaa; }
.f-ic { margin-left: 3px; }
.vr { width: 1px; height: 18px; background: #ddd; margin-left: 4px; }
.f-ic2 { margin-left: 6px; }
.caret-s { margin-left: 8px; border: 3.500px solid transparent; border-top: 4px solid #666; border-bottom: 0; }
.tables-h { font-size: 12.500px; font-weight: 700; color: #222; padding: 7px 0 0 18px; height: 29px; }
.fields li { height: 21px; display: flex; align-items: center; font-size: 12px; color: #333; }
.fields li.ital { font-style: italic; font-size: 12.500px; }
.fields li.last-d { position: relative; }
.fields li.last-d::after { content: ""; position: absolute; left: 15px; right: 6px; bottom: -1px; height: 1px; background: #ddd; }
.fields li.first-m { margin-top: 2px; }
.fi { width: 47px; flex: none; display: flex; justify-content: center; padding-right: 1px; padding-left: 12px; }
.abc { font-size: 9px; font-style: normal; color: #3f7d9b; font-weight: 600; }
.hs { width: 12px; height: 12px; }
.calc { width: 15px; height: 11px; }
.yr { width: 14px; height: 13px; }

.cards { width: 154px; margin-left: 6px; flex: none; display: flex; flex-direction: column; }
.card { background: #fafafa; border: 1px solid #ddd; padding: 8px 6px 0; }
.card h3 { line-height: 14px; }
.pages { height: 61px; }
.filters { height: 76px; margin-top: 8px; padding-top: 7px; }
.marks { height: 207px; margin-top: 7px; }
.pill { display: flex; align-items: center; color: #fff; font-size: 12.800px; border-radius: 10px; height: 20px; }
.blue { background: #4f95b4; }
.green { background: #02b27f; }
.filter-pill { margin: 10px 0 0 -2px; width: 144px; padding-left: 11px; }
.markdrop { margin-top: 13px; height: 20px; border: 1px solid #ddd; background: #f7f7f7; display: flex; align-items: center; padding-left: 12px; gap: 7px; font-size: 11px; color: #666; position: relative; }
.markdrop b { position: absolute; right: 0; top: 0; bottom: 0; width: 18px; border-left: 1px solid #ddd; display: flex; align-items: center; justify-content: center; }
.markdrop b::after { content: ""; border: 3.500px solid transparent; border-top: 4px solid #666; border-bottom: 0; }
.markgrid { display: grid; grid-template-columns: 43px 42px 43px; grid-auto-rows: 42px; gap: 6px; margin-top: 6px; }
.mb { border: 1px solid #ddd; background: #fafafa; display: flex; flex-direction: column; align-items: center; justify-content: flex-end; padding-bottom: 1px; font-size: 11px; color: #444; gap: 3px; }
.mb svg { margin-bottom: 1px; }

.workspace { width: 983px; margin-left: 7px; flex: none; display: flex; flex-direction: column; }
.shelf { height: 27px; flex: none; background: #fafafa; border: 1px solid #ddd; border-top-color: #e8e8e8; display: flex; align-items: center; margin-bottom: 7px; }
.shelf-l { width: 124px; height: 100%; flex: none; border-right: 1px solid #ddd; display: flex; align-items: center; gap: 6px; padding-left: 6px; font-size: 12px; color: #555; }
.shelf-pill { width: 148px; margin-left: 2px; gap: 6px; padding-left: 12px; }
.shelf-pill.sum { padding-left: 11px; }
.view { height: 518px; background: #fff; border: 1px solid #bbb; }
.v-title { height: 47px; padding: 11px 0 0 9px; font-size: 20px; line-height: 26px; color: #333; }
.chart { display: block; }
.ax-t { font-family: "Open Sans", sans-serif; font-size: 11px; fill: #333; text-anchor: middle; font-weight: 500; }
.ax-t.na { font-size: 12px; }
.ax-l text { font-size: 12px; fill: #888; text-anchor: end; }
.ax-b text { font-size: 12px; fill: #888; text-anchor: middle; }
.stars path { fill: none; stroke: #222; stroke-width: 2; }

.showme { position: absolute; left: 1159px; top: 0; width: 203px; height: 556px; background: #fafafa; border: 1px solid #ddd; border-top: 0; box-shadow: 1px 1px 3px rgba(0,0,0,.35); z-index: 2; padding: 15px 0 0 12px; }
.thumbs { display: grid; grid-template-columns: repeat(3, 56px); grid-auto-rows: 42px; gap: 4px; }
.thumb { background: #fff; border: 1px solid #e2e2e2; }
.thumb svg { display: block; width: 54px; height: 40px; }
.thumb.sel { border-color: #e0642e; outline: 1px solid #e0642e; outline-offset: -2px; }
.mini text { font-size: 4.500px; fill: #888; }
.hint { display: flex; align-items: center; height: 20px; font-size: 11.500px; color: #444; padding-left: 2px; }
.hint b { color: #111; }
.r1 { margin-top: 15px; }
.r2 { margin-top: 3px; }
.r3 { margin-top: 3px; }
.r4 { margin-top: 8px; }
.cal { margin-left: 8px; margin-top: -3px; }
.hp { height: 20px; font-size: 12px; justify-content: center; margin-left: 3px; }
.dim { width: 90px; }
.mea { width: 79px; margin-left: 1px; }

.tabs { height: 30px; flex: none; display: flex; background: #e6e6e6; border-top: 1px solid #ccc; border-bottom: 1px solid #d0d0d0; font-size: 11.800px; color: #777; }
.tab { width: 57px; flex: none; display: flex; align-items: center; justify-content: center; gap: 5px; border-right: 1px solid #ccc; }
.tab.w56 { width: 56px; }
.tab.w63 { width: 64px; }
.tab.ds { width: 131px; justify-content: flex-start; padding-left: 10px; }
.tab.cur { background: #fff; color: #444; font-weight: 600; margin-top: 1px; }
.tab.dash { width: 102px; }
.tab.story { width: 72px; }
.tab.story + .tab.story { width: 73px; }
.tab.add { width: 33px; }
.status { height: 20px; flex: none; display: flex; align-items: center; background: #e8e8e8; font-size: 10.800px; color: #444; }
.st.a { width: 61px; padding-left: 3px; }
.st.b { width: 114px; }
.st.c { width: 824px; }
.user { width: 127px; height: 100%; border-left: 1px solid #ddd; border-right: 1px solid #ddd; background: #f0f0f0; display: flex; align-items: center; padding-left: 7px; gap: 9px; position: relative; }
.user b { position: absolute; right: 5px; top: 8px; border: 4px solid transparent; border-top: 5px solid #222; border-bottom: 0; }
.status .cell { width: 27px; height: 100%; border-right: 1px solid #ddd; background: #f0f0f0; }
.status .cell.wide { width: 47px; border-right: 2px solid #ccc; }
.pager { width: 71px; height: 100%; display: flex; align-items: center; padding-left: 10px; border-right: 1px solid #ddd; }
.views { display: flex; gap: 10px; padding-left: 8px; align-items: center; }

.taskbar { height: 41px; flex: none; display: flex; align-items: center; background: linear-gradient(90deg, #cde1ea 0%, #cfe1ec 50%, #d6e3f0 100%); color: #111; }
.start { width: 48px; display: flex; justify-content: center; flex: none; }
.tsearch { width: 287px; height: 39px; margin-top: 2px; background: #fff; border: 1px solid #e0e4e8; display: flex; align-items: center; padding-left: 13px; gap: 9px; font-size: 14px; flex: none; position: relative; }
.jelly { position: absolute; right: 3px; top: 0; }
.tview { width: 52px; display: flex; justify-content: center; flex: none; }
.app-i { width: 47.500px; height: 41px; flex: none; display: flex; align-items: center; justify-content: center; position: relative; }
.app-i.on::after { content: ""; position: absolute; left: 4px; right: 4px; bottom: 0; height: 2px; background: #0a78d4; }
.app-i.act { background: #e9f1f7; }
.app-i.act::after { left: 0; right: 0; }
.chr { width: 24px; height: 24px; }
.avatar { position: absolute; left: 24px; top: 18px; width: 15px; height: 15px; border-radius: 50%; background: #8b8580; border: 2px dotted #ddd; }
.weather { display: flex; align-items: center; margin-left: 23px; width: 81px; flex: none; gap: 6px; font-size: 13px; }
.tray { width: 176px; height: 41px; flex: none; position: relative; }
.tray svg, .eng { position: absolute; top: 13px; }
.t1 { left: 0; top: 17px !important; }
.t2 { left: 24px; }
.t3 { left: 47px; top: 15px !important; }
.t4 { left: 71px; }
.t5 { left: 93px; top: 15px !important; }
.t6 { left: 123px; }
.eng { left: 152px; font-size: 11.500px; }
.clock { width: 76px; margin-left: 2px; flex: none; display: flex; flex-direction: column; align-items: center; font-size: 11.200px; line-height: 19px; }
.notif { margin-left: 10px; display: flex; }
.svgt { font-family: "Liberation Serif", serif; text-anchor: middle; }
.t-t { font-size: 11px; fill: #666; }
.t-l { font-size: 10px; fill: #555; }
.off-t { font-family: "Liberation Sans", sans-serif; font-size: 11px; font-weight: 700; fill: #fff; }
```
